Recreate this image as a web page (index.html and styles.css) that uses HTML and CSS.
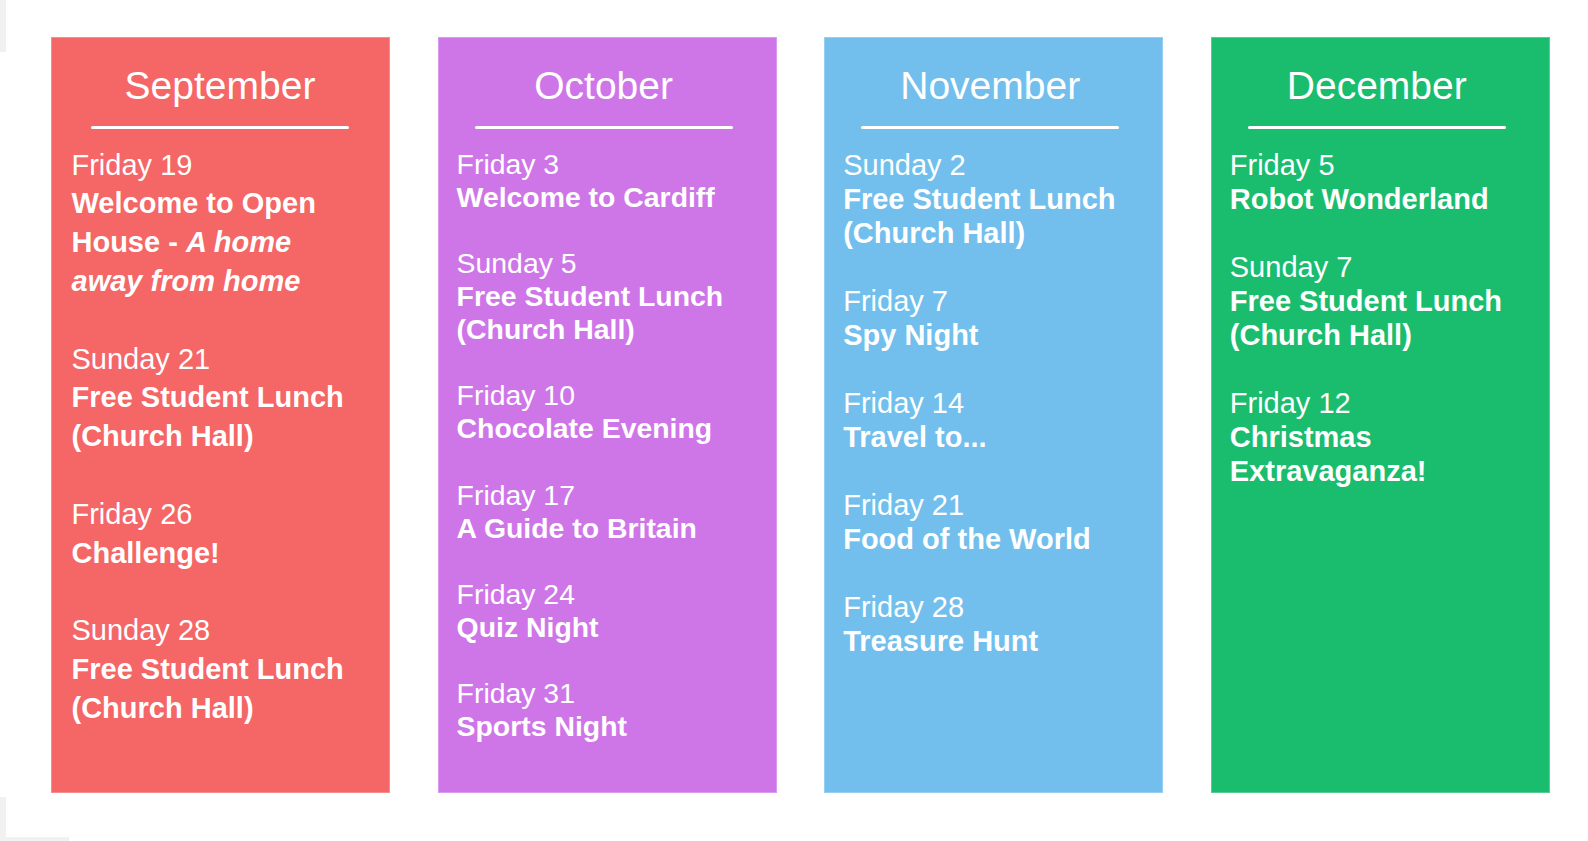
FILE: index.html
```html
<!DOCTYPE html>
<html lang="en">
<head>
<meta charset="utf-8">
<title>Events Calendar</title>
<link rel="stylesheet" href="styles.css">
</head>
<body>
<div class="edge edge-top"></div>
<div class="edge edge-bottom"></div>
<div class="edge edge-corner"></div>
<main class="board">
  <section class="month month-sep">
    <header class="month-head">
      <h2 class="month-title">September</h2>
      <div class="rule"></div>
    </header>
    <div class="events">
      <div class="event"><div class="date">Friday 19</div><div class="name">Welcome to Open House - <em>A home away from home</em></div></div>
      <div class="event"><div class="date">Sunday 21</div><div class="name">Free Student Lunch (Church Hall)</div></div>
      <div class="event"><div class="date">Friday 26</div><div class="name">Challenge!</div></div>
      <div class="event"><div class="date">Sunday 28</div><div class="name">Free Student Lunch (Church Hall)</div></div>
    </div>
  </section>
  <section class="month month-oct">
    <header class="month-head">
      <h2 class="month-title">October</h2>
      <div class="rule"></div>
    </header>
    <div class="events">
      <div class="event"><div class="date">Friday 3</div><div class="name">Welcome to Cardiff</div></div>
      <div class="event"><div class="date">Sunday 5</div><div class="name">Free Student Lunch (Church Hall)</div></div>
      <div class="event"><div class="date">Friday 10</div><div class="name">Chocolate Evening</div></div>
      <div class="event"><div class="date">Friday 17</div><div class="name">A Guide to Britain</div></div>
      <div class="event"><div class="date">Friday 24</div><div class="name">Quiz Night</div></div>
      <div class="event"><div class="date">Friday 31</div><div class="name">Sports Night</div></div>
    </div>
  </section>
  <section class="month month-nov">
    <header class="month-head">
      <h2 class="month-title">November</h2>
      <div class="rule"></div>
    </header>
    <div class="events">
      <div class="event"><div class="date">Sunday 2</div><div class="name">Free Student Lunch (Church Hall)</div></div>
      <div class="event"><div class="date">Friday 7</div><div class="name">Spy Night</div></div>
      <div class="event"><div class="date">Friday 14</div><div class="name">Travel to...</div></div>
      <div class="event"><div class="date">Friday 21</div><div class="name">Food of the World</div></div>
      <div class="event"><div class="date">Friday 28</div><div class="name">Treasure Hunt</div></div>
    </div>
  </section>
  <section class="month month-dec">
    <header class="month-head">
      <h2 class="month-title">December</h2>
      <div class="rule"></div>
    </header>
    <div class="events">
      <div class="event"><div class="date">Friday 5</div><div class="name">Robot Wonderland</div></div>
      <div class="event"><div class="date">Sunday 7</div><div class="name">Free Student Lunch (Church Hall)</div></div>
      <div class="event"><div class="date">Friday 12</div><div class="name">Christmas Extravaganza!</div></div>
    </div>
  </section>
</main>
</body>
</html>
```

FILE: styles.css
```css
* {
  box-sizing: border-box;
}

html, body {
  margin: 0;
  padding: 0;
  background: #ffffff;
}

body {
  font-family: "Liberation Sans", Arial, Helvetica, sans-serif;
  color: #ffffff;
  width: 1588px;
  height: 841px;
  overflow: hidden;
  position: relative;
}

/* faint page-edge artifacts */
.edge {
  position: absolute;
  background: #f1f1f1;
}
.edge-top {
  left: 0;
  top: 0;
  width: 6px;
  height: 52px;
}
.edge-bottom {
  left: 0;
  top: 797px;
  width: 6px;
  height: 44px;
}
.edge-corner {
  left: 0;
  top: 837px;
  width: 69px;
  height: 4px;
}

.board {
  display: flex;
  gap: 47.6px;
  padding: 37px 0 0 51px;
}

.month {
  --lh: 34px;
  --fs: 29px;
  --pl: 18px;
  --shift: 7px;
  --gap-top: 45.5px;
  width: 339px;
  height: 756px;
  padding: 0 34px 0 var(--pl);
  border: 1px solid rgba(255, 255, 255, 0.25);
  display: flex;
  flex-direction: column;
}

.month-sep {
  background: #f56666;
  --lh: 38.8px;
  --pl: 19.5px;
  --shift: 1px;
}
.month-oct {
  background: #ce76e8;
  --lh: 33.1px;
  --fs: 28.4px;
  --gap-top: 44.6px;
}
.month-nov {
  background: #72bfed;
  --lh: 34px;
}
.month-dec {
  background: #1abd6e;
  --lh: 34px;
}

.month-head {
  margin-left: calc(0px - var(--pl));
  margin-right: -34px;
  padding-right: var(--shift);
  display: flex;
  flex-direction: column;
  align-items: center;
  padding-top: 25.3px;
}

.month-title {
  margin: 0;
  font-size: 39px;
  font-weight: 400;
  line-height: 45px;
  white-space: nowrap;
}

.rule {
  width: 258px;
  height: 3px;
  margin-top: 18.2px;
  background: #ffffff;
  border-radius: 1.5px;
}

.events {
  font-size: var(--fs);
  line-height: var(--lh);
  /* first baseline sits a fixed distance below the rule */
  margin-top: calc(var(--gap-top) - ((var(--lh) - 1.117 * var(--fs)) / 2 + 0.905 * var(--fs)));
  display: flex;
  flex-direction: column;
  gap: var(--lh);
}

.date {
  font-weight: 400;
}

.name {
  font-weight: 700;
}

.name em {
  font-style: italic;
}
```
